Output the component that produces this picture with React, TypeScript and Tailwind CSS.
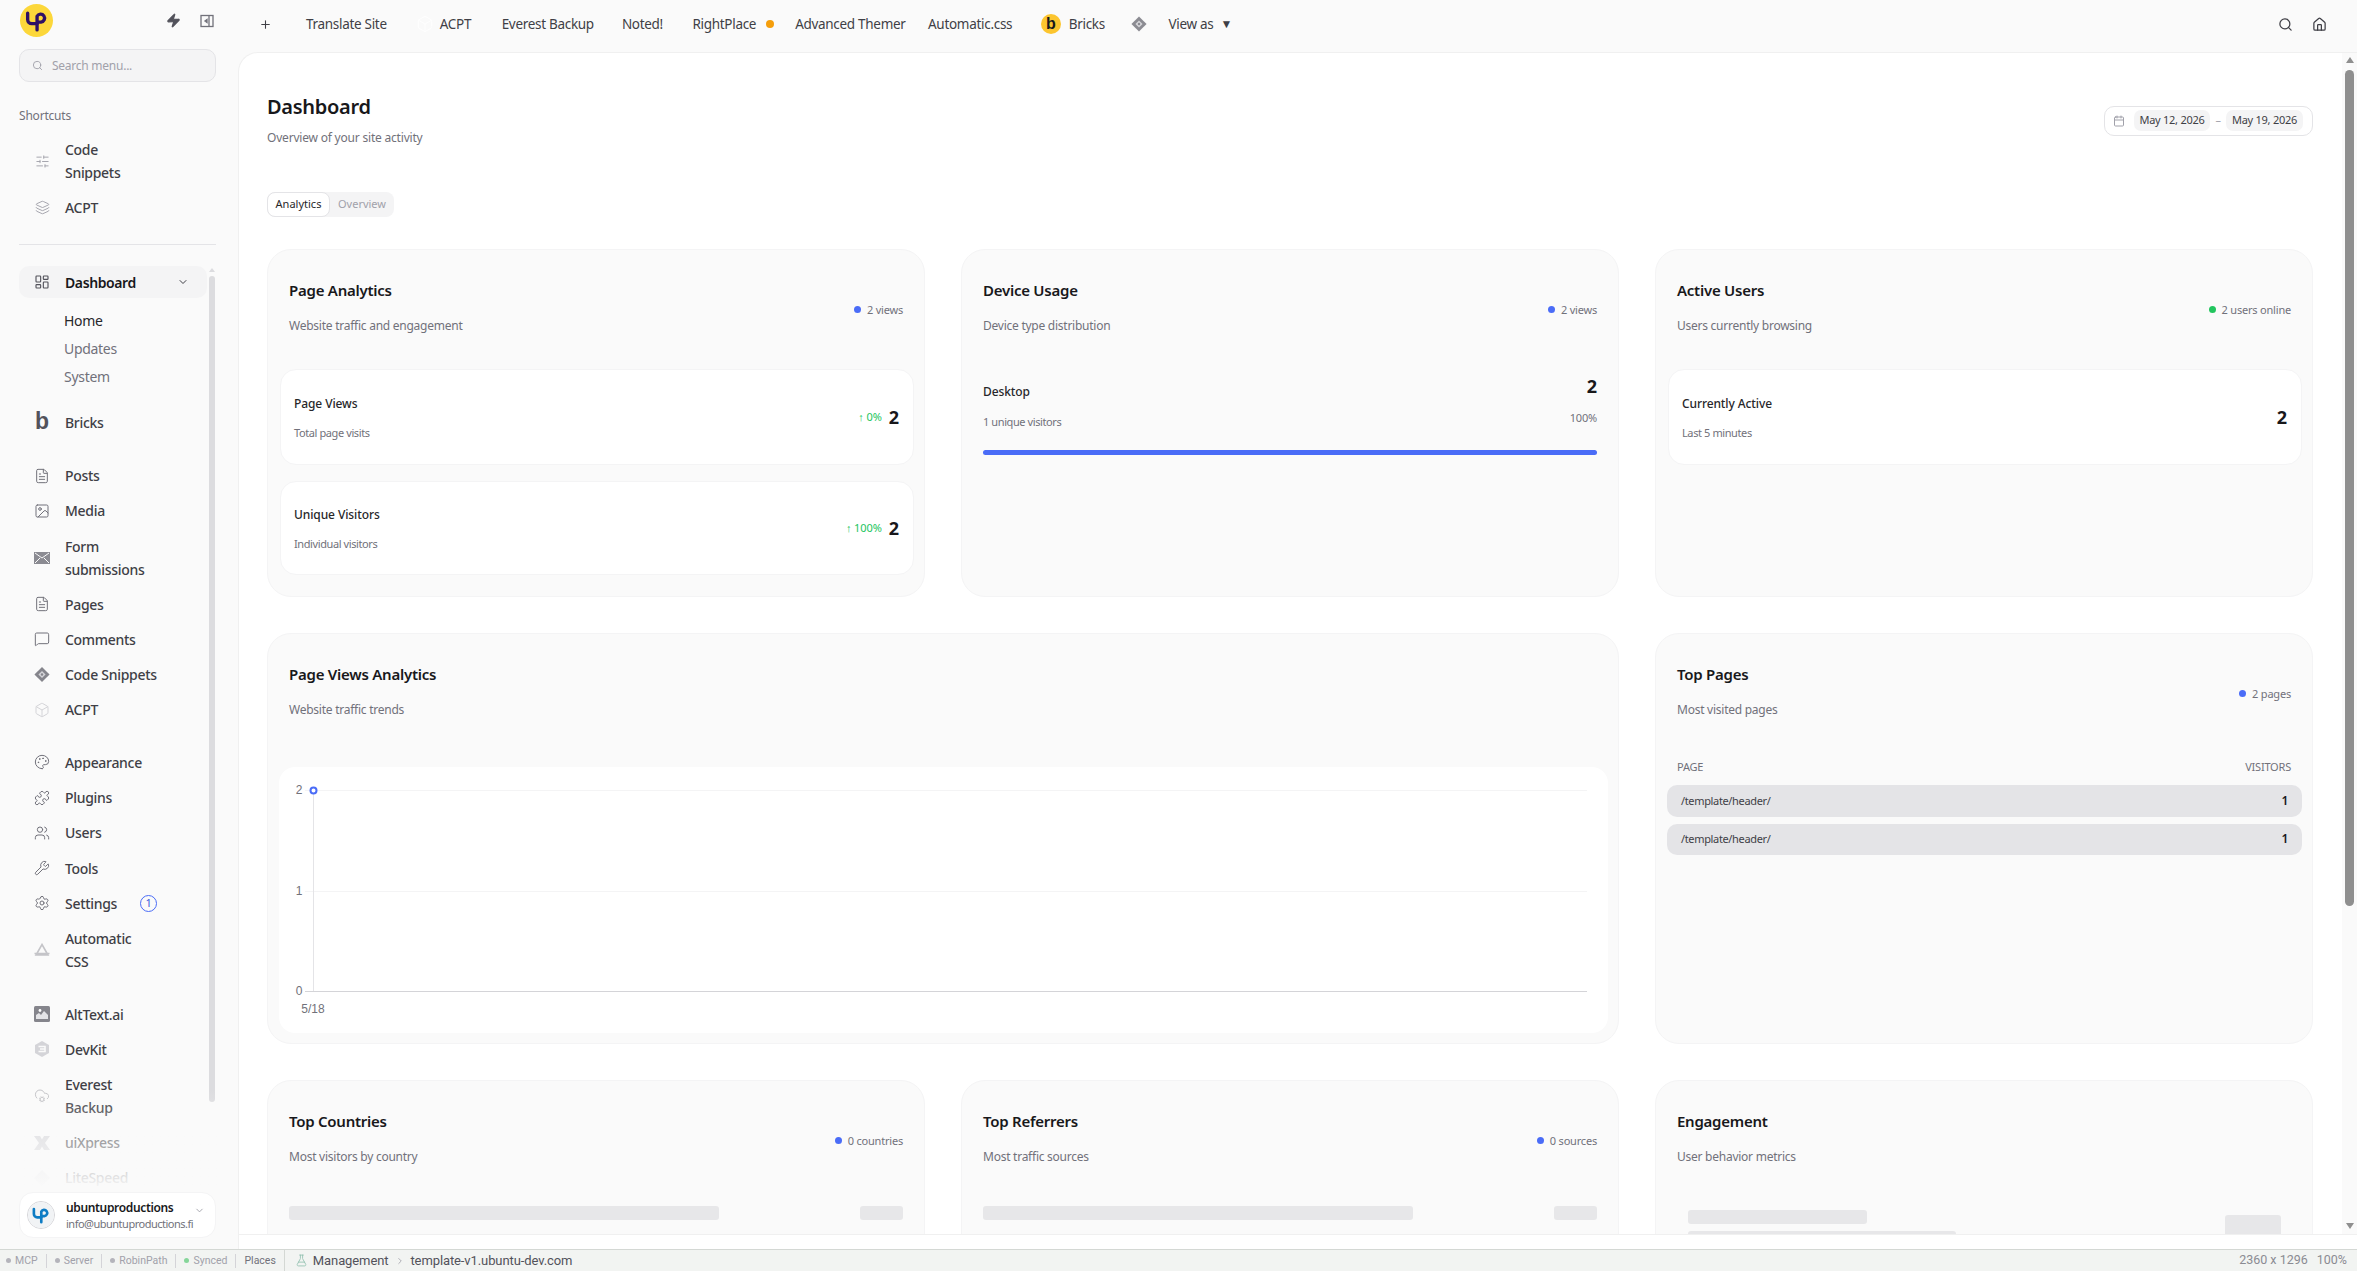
import React from "react";
import {
  SlidersHorizontal, Layers, LayoutDashboard, ChevronDown, FileText, Image as ImageIcon, MessageSquare, Box, Palette, Puzzle, Users, Wrench, Settings, Plus, Search, Home, Calendar, Zap, CloudCog, FlaskConical, ChevronRight,
} from "lucide-react";

const UpLogo = ({ color, size, bg }: { color: string; size: number; bg: string }) => (
  <div className={`flex items-center justify-center rounded-full ${bg}`} style={{ width: size, height: size }}>
    <svg viewBox="0 0 24 24" width={size * 0.76} height={size * 0.76} fill="none" stroke={color} strokeWidth="3.2" strokeLinecap="round" strokeLinejoin="round">
      <path d="M3.5 5v6a4 4 0 0 0 4 4h5" />
      <path d="M12.5 21V8a3.8 3.8 0 1 1 3.8 5.5h-3.8" />
    </svg>
  </div>
);

const Envelope = () => (
  <svg viewBox="0 0 16 12" width="16" height="12" fill="#8b8b92">
    <path d="M0 0h16v12H0z" />
    <path d="M1 1l7 5 7-5M1 11l5-5M15 11l-5-5" stroke="#fafafa" strokeWidth="1" fill="none" />
  </svg>
);
const Diamond = ({ c = "#85858c", s = 17 }: { c?: string; s?: number }) => (
  <svg viewBox="0 0 18 18" width={s} height={s}>
    <path d="M9 0.5L17.5 9 9 17.5 0.5 9z" fill={c} />
    <path d="M9 5l4 4-4 4-4-4z" fill="#d4d4d8" />
    <circle cx="9" cy="9" r="1.4" fill={c} />
  </svg>
);
const Tri = () => (
  <svg viewBox="0 0 16 14" width="16" height="14" fill="none" stroke="#c4c4c8" strokeWidth="1.6">
    <path d="M8 1.5L14 12H2zM0.5 10.5h15" />
  </svg>
);
const AltIcon = () => (
  <svg viewBox="0 0 16 16" width="16" height="16">
    <rect width="16" height="16" rx="1.5" fill="#85858c" />
    <path d="M2 13V9l3-2 2 2 3-4 4 4v4z" fill="#e4e4e7" />
    <circle cx="6" cy="4.5" r="1.4" fill="#fff" />
  </svg>
);
const DevKitIcon = () => (
  <svg viewBox="0 0 16 16" width="16" height="16">
    <path d="M8 0l7 4v8l-7 4-7-4V4z" fill="#d4d4d8" />
    <path d="M4.5 5.5h6.5v5H4.5M6 8h5" stroke="#fafafa" strokeWidth="1.6" fill="none" />
  </svg>
);
const XIcon = () => (
  <svg viewBox="0 0 16 14" width="16" height="14" fill="#d4d4d8">
    <path d="M0 0h6l2 3.5L10 0h6l-5 7 5 7h-6L8 10.5 6 14H0l5-7z" />
  </svg>
);
const LsIcon = () => (
  <svg viewBox="0 0 16 16" width="16" height="16" fill="#e4e4e7"><path d="M8 0l8 8-8 8-8-8z" /></svg>
);
const BIcon = () => <span className="font-bold text-[23px] leading-none -mt-[3px] text-[#52525b] font-['Liberation_Sans',sans-serif]">b</span>;

type It = { t: string; i: React.ReactNode; badge?: boolean };
const L = "#71717a";
const ic = { size: 16, color: L, strokeWidth: 1.5 };

const groups: It[][] = [
  [{ t: "Bricks", i: <BIcon /> }],
  [
    { t: "Posts", i: <FileText {...ic} /> },
    { t: "Media", i: <ImageIcon {...ic} /> },
    { t: "Form\nsubmissions", i: <Envelope /> },
    { t: "Pages", i: <FileText {...ic} /> },
    { t: "Comments", i: <MessageSquare {...ic} /> },
    { t: "Code Snippets", i: <Diamond /> },
    { t: "ACPT", i: <Box size={16} color="#d4d4d8" strokeWidth={1.5} /> },
  ],
  [
    { t: "Appearance", i: <Palette {...ic} /> },
    { t: "Plugins", i: <Puzzle {...ic} /> },
    { t: "Users", i: <Users {...ic} /> },
    { t: "Tools", i: <Wrench {...ic} /> },
    { t: "Settings", i: <Settings {...ic} />, badge: true },
    { t: "Automatic\nCSS", i: <Tri /> },
  ],
  [
    { t: "AltText.ai", i: <AltIcon /> },
    { t: "DevKit", i: <DevKitIcon /> },
    { t: "Everest\nBackup", i: <CloudCog size={16} color="#c4c4c8" strokeWidth={1.5} /> },
    { t: "uiXpress", i: <XIcon /> },
    { t: "LiteSpeed", i: <LsIcon /> },
  ],
];

const NavRow = ({ it }: { it: It }) => (
  <div className="flex items-center pl-[15px] py-[6.1px]">
    <div className="w-[16px] flex justify-center shrink-0">{it.i}</div>
    <div className="ml-[15px] text-[14px] leading-[23px] tracking-[-0.3px] text-[#3f3f46] font-medium whitespace-pre-line">{it.t}</div>
    {it.badge && (
      <div className="ml-[23px] w-[17px] h-[17px] rounded-full border border-[#4a6cf7] text-[#3b5bdb] text-[11px] flex items-center justify-center">1</div>
    )}
  </div>
);

const Sidebar = () => (
  <aside className="w-[238px] shrink-0 flex flex-col bg-[#fafafa] pl-[19px] pr-[22px] min-h-0">
    <div className="h-[49px] shrink-0 flex items-center justify-between">
      <div className="ml-px -mt-[8px]"><UpLogo color="#2e1065" size={33} bg="bg-[#fcd73a]" /></div>
      <div className="flex items-center gap-[19px] pr-[2px] -mt-[8px]">
        <Zap size={15} fill="#52525b" color="#52525b" />
        <svg viewBox="0 0 14 14" width="14" height="14" fill="none" stroke="#71717a" strokeWidth="1.3"><rect x="1" y="1.5" width="12" height="11" /><path d="M9 1.5v11" /><path d="M7 5.5L5 7l2 1.5z" fill="#71717a" /></svg>
      </div>
    </div>
    <div className="h-[33px] shrink-0 rounded-[10px] border border-[#e4e4e7] bg-[#f4f4f5] flex items-center pl-[12px] gap-[9px]">
      <Search size={11} color="#a1a1aa" />
      <span className="text-[12px] tracking-[-0.25px] text-[#a1a1aa]">Search menu...</span>
    </div>
    <div className="mt-[24px] text-[12px] leading-[20px] tracking-[-0.2px] text-[#71717a]">Shortcuts</div>
    <div className="mt-[6px]">
      <NavRow it={{ t: "Code\nSnippets", i: <SlidersHorizontal size={15} color="#a1a1aa" strokeWidth={1.5} /> }} />
      <NavRow it={{ t: "ACPT", i: <Layers size={15} color="#a1a1aa" strokeWidth={1.5} /> }} />
    </div>
    <div className="mt-[19px] h-px bg-[#e4e4e7] shrink-0" />
    <div className="relative flex-1 min-h-0 overflow-hidden flex -mr-[1px] pt-[21px]">
      <div className="w-[188px] shrink-0">
        <div className="h-[32px] rounded-[10px] bg-[#f4f4f5] flex items-center pl-[15px] pr-[18px]">
          <LayoutDashboard size={16} color="#52525b" strokeWidth={1.7} />
          <span className="ml-[15px] text-[14px] font-semibold tracking-[-0.4px] text-[#18181b] flex-1">Dashboard</span>
          <ChevronDown size={12} color="#3f3f46" />
        </div>
        <div className="mt-[9px] mb-[14px] pl-[45px] text-[14px] leading-[28px] tracking-[-0.3px]">
          <div className="text-[#27272a]">Home</div>
          <div className="text-[#71717a]">Updates</div>
          <div className="text-[#71717a]">System</div>
        </div>
        {groups.map((g, i) => (
          <div key={i} className="mb-[17.5px]">
            {g.map((it) => <NavRow key={it.t} it={it} />)}
          </div>
        ))}
      </div>
      <div className="ml-[2px] w-[6px] flex flex-col items-center shrink-0 -mt-[21px] pt-[23px]">
        <div className="w-0 h-0 border-x-[3px] border-x-transparent border-b-[4px] border-b-[#dcdcdf]" />
        <div className="mt-[4px] w-[6px] h-[826px] rounded-full bg-[#dcdcdf]" />
      </div>
      <div className="absolute left-0 right-0 bottom-0 h-[100px] bg-gradient-to-b from-[#fafafa00] to-[#fafafa]" />
    </div>
    <div className="shrink-0 h-[46px] mt-[2px] mb-[11px] rounded-[14px] bg-white border border-[#f4f4f5] flex items-center pl-[7px] pr-[10px]">
      <div className="border border-[#d4d4d8] rounded-full"><UpLogo color="#0e7cc4" size={26} bg="bg-[#f1f3f5]" /></div>
      <div className="ml-[11px] flex-1 pt-px">
        <div className="text-[12px] font-semibold tracking-[-0.35px] text-[#18181b] leading-[16px]">ubuntuproductions</div>
        <div className="text-[11px] tracking-[-0.5px] text-[#71717a] leading-[16px]">info@ubuntuproductions.fi</div>
      </div>
      <ChevronDown size={11} color="#a1a1aa" className="-mt-[10px]" />
    </div>
  </aside>
);

const TopBar = () => (
  <div className="h-[52px] shrink-0 flex items-center bg-[#fafafa] text-[13.5px] tracking-[-0.3px] text-[#3f3f46] pl-[21px] pr-[30px] pb-[4px]">
    <Plus size={13} color="#3f3f46" />
    <span className="ml-[34px]">Translate Site</span>
    <Box size={18} color="#ffffff" strokeWidth={1.2} className="ml-[29px]" />
    <span className="ml-[6px]">ACPT</span>
    <span className="ml-[30.5px]">Everest Backup</span>
    <span className="ml-[28px]">Noted!</span>
    <span className="ml-[29.5px]">RightPlace</span>
    <span className="ml-[10px] w-[8px] h-[8px] rounded-full bg-[#f59e0b]" />
    <span className="ml-[21px]">Advanced Themer</span>
    <span className="ml-[22.5px]">Automatic.css</span>
    <span className="ml-[28.5px] w-[20px] h-[20px] rounded-full bg-[#fcc52e] flex items-center justify-center font-bold text-[16px] leading-none text-[#18181b] font-['Liberation_Sans',sans-serif]">b</span>
    <span className="ml-[8px]">Bricks</span>
    <span className="ml-[26px]"><Diamond c="#8b8b92" s={16} /></span>
    <span className="ml-[21.5px]">View as</span>
    <span className="ml-[7px] text-[12px] leading-none">▼</span>
    <div className="ml-auto flex items-center gap-[19px]">
      <Search size={15} color="#3f3f46" />
      <Home size={15} color="#3f3f46" />
    </div>
  </div>
);

const Badge = ({ t, green }: { t: string; green?: boolean }) => (
  <div className="flex items-center gap-[6px] mt-[7px] text-[11px] leading-[16px] tracking-[-0.2px] text-[#71717a]">
    <span className={`w-[7px] h-[7px] rounded-full ${green ? "bg-[#22c55e]" : "bg-[#4a6cf7]"}`} />
    {t}
  </div>
);

const Card = ({ title, desc, badge, green, children, className = "" }: { title: string; desc: string; badge?: string; green?: boolean; children?: React.ReactNode; className?: string }) => (
  <div className={`rounded-[24px] bg-[#fafafa] border border-[#f4f4f5] flex flex-col ${className}`}>
    <div className="pt-[28px] px-[21px] flex items-center justify-between">
      <div>
        <div className="text-[15px] leading-[24px] font-semibold tracking-[-0.25px] text-[#18181b]">{title}</div>
        <div className="mt-[16px] text-[12px] leading-[16px] tracking-[-0.25px] text-[#71717a]">{desc}</div>
      </div>
      {badge && <Badge t={badge} green={green} />}
    </div>
    {children}
  </div>
);

const Stat = ({ t, d, tr, h }: { t: string; d: string; tr?: string; h: string }) => (
  <div className={`${h} rounded-[16px] bg-white border border-[#f4f4f5] pl-[13px] pr-[14px] flex items-center justify-between`}>
    <div className="flex flex-col gap-[11px]">
      <div className="text-[12px] leading-[20px] font-medium tracking-[-0.1px] text-[#27272a]">{t}</div>
      <div className="text-[11px] leading-[16px] tracking-[-0.4px] text-[#71717a]">{d}</div>
    </div>
    <div className="flex items-center gap-[7px]">
      {tr && <span className="text-[11px] tracking-[-0.1px] text-[#22c55e]">{tr}</span>}
      <span className="text-[18px] font-bold text-[#18181b] leading-[28px]">2</span>
    </div>
  </div>
);

const Chart = () => (
  <div className="mt-[49px] ml-[11px] mr-[10px] mb-[10px] h-[266px] rounded-[16px] bg-white">
    <svg viewBox="0 0 1329 266" className="w-full h-full block font-['Liberation_Sans',sans-serif]">
      <path d="M26 23.5H1308M26 124.5H1308" stroke="#f4f4f5" />
      <path d="M34.5 23V224" stroke="#e4e4e7" />
      <path d="M26 224.5H1308" stroke="#d4d4d8" />
      <g fontSize="12" fill="#71717a" textAnchor="middle">
        <text x="20" y="27">2</text>
        <text x="20" y="128">1</text>
        <text x="20" y="228">0</text>
        <text x="34" y="246">5/18</text>
      </g>
      <circle cx="34.5" cy="23.5" r="3" fill="#fff" stroke="#4a6cf7" strokeWidth="2" />
    </svg>
  </div>
);

const Skel = ({ className }: { className: string }) => <div className={`rounded-[3px] bg-[#e7e7e9] ${className}`} />;

const SkelRow = () => (
  <div className="mt-[41px] px-[21px] flex justify-between">
    <Skel className="w-[430px] h-[14px]" />
    <Skel className="w-[43px] h-[14px]" />
  </div>
);

const Content = () => (
  <div className="flex-1 min-w-0 min-h-0 overflow-hidden pl-[28px] pr-[29px]">
    <div className="pt-[40px] flex items-center justify-between">
      <div>
        <div className="text-[20px] leading-[28px] font-semibold tracking-[-0.3px] text-[#18181b]">Dashboard</div>
        <div className="mt-[9px] text-[12px] leading-[16px] tracking-[-0.2px] text-[#71717a]">Overview of your site activity</div>
      </div>
      <div className="mt-[2px] h-[30px] w-[209px] rounded-[10px] border border-[#e4e4e7] bg-white flex items-center pl-[8px] text-[11px] tracking-[-0.25px] text-[#3f3f46]">
        <Calendar size={12} color="#a1a1aa" />
        <span className="ml-[9px] w-[76px] h-[21px] rounded-[7px] bg-[#f4f4f5] flex items-center justify-center">May 12, 2026</span>
        <span className="w-[16px] text-center text-[#a1a1aa]">–</span>
        <span className="w-[77px] h-[21px] rounded-[7px] bg-[#f4f4f5] flex items-center justify-center">May 19, 2026</span>
      </div>
    </div>
    <div className="mt-[46px] h-[25px] w-[127px] rounded-[8px] bg-[#f4f4f5] flex items-center text-[11px]">
      <div className="w-[63px] h-[25px] rounded-[8px] bg-white border border-[#e4e4e7] flex items-center justify-center text-[#27272a]">Analytics</div>
      <div className="flex-1 text-center text-[#a1a1aa]">Overview</div>
    </div>
    <div className="mt-[32px] grid grid-cols-3 gap-x-[36px] gap-y-[36px]">
      <Card title="Page Analytics" desc="Website traffic and engagement" badge="2 views">
        <div className="mt-[35px] mb-[21px] pl-[12px] pr-[10px] flex flex-col gap-[16px]">
          <Stat t="Page Views" d="Total page visits" tr="↑ 0%" h="h-[96px]" />
          <Stat t="Unique Visitors" d="Individual visitors" tr="↑ 100%" h="h-[94px]" />
        </div>
      </Card>
      <Card title="Device Usage" desc="Device type distribution" badge="2 views">
        <div className="mt-[38px] px-[21px]">
          <div className="flex justify-between">
            <div className="pt-[10px]">
              <div className="text-[12px] leading-[20px] font-medium tracking-[-0.1px] text-[#27272a]">Desktop</div>
              <div className="mt-[12px] text-[11px] leading-[16px] tracking-[-0.4px] text-[#71717a]">1 unique visitors</div>
            </div>
            <div className="text-right">
              <div className="text-[18px] leading-[28px] font-bold text-[#18181b]">2</div>
              <div className="mt-[10px] text-[11px] leading-[16px] tracking-[-0.2px] text-[#71717a]">100%</div>
            </div>
          </div>
          <div className="mt-[20px] h-[5px] rounded-full bg-[#4a6cf7]" />
        </div>
      </Card>
      <Card title="Active Users" desc="Users currently browsing" badge="2 users online" green>
        <div className="mt-[35px] pl-[12px] pr-[10px]">
          <Stat t="Currently Active" d="Last 5 minutes" h="h-[96px]" />
        </div>
      </Card>
      <Card title="Page Views Analytics" desc="Website traffic trends" className="col-span-2">
        <Chart />
      </Card>
      <Card title="Top Pages" desc="Most visited pages" badge="2 pages">
        <div className="mt-[41px] px-[21px] flex justify-between text-[11px] leading-[16px] tracking-[-0.2px] text-[#71717a]">
          <span>PAGE</span><span>VISITORS</span>
        </div>
        <div className="mt-[10px] pl-[11px] pr-[10px] flex flex-col gap-[7px]">
          {[0, 1].map((i) => (
            <div key={i} className="h-[31.5px] rounded-[10px] bg-[#e4e4e7] flex items-center justify-between px-[14px] text-[11px] tracking-[-0.35px] text-[#3f3f46]">
              <span>/template/header/</span>
              <span className="font-semibold text-[12px] text-[#18181b]">1</span>
            </div>
          ))}
        </div>
      </Card>
      <Card title="Top Countries" desc="Most visitors by country" badge="0 countries" className="h-[300px]"><SkelRow /></Card>
      <Card title="Top Referrers" desc="Most traffic sources" badge="0 sources" className="h-[300px]"><SkelRow /></Card>
      <Card title="Engagement" desc="User behavior metrics" className="h-[300px]">
        <div className="mt-[45px] pl-[32px] pr-[31px] flex justify-between">
          <div>
            <Skel className="w-[179px] h-[14px]" />
            <Skel className="mt-[7px] w-[268px] h-[14px]" />
          </div>
          <Skel className="mt-[5px] w-[56px] h-[40px]" />
        </div>
      </Card>
    </div>
  </div>
);

const ScrollBar = () => (
  <div className="w-[15px] shrink-0 bg-[#fafafa] flex flex-col items-center pt-[4px] pb-[2px]">
    <div className="w-0 h-0 border-x-[4.5px] border-x-transparent border-b-[6px] border-b-[#8f8f8f]" />
    <div className="mt-[7px] w-[9px] h-[836px] rounded-full bg-[#8f8f8f]" />
    <div className="mt-auto mb-[3px] w-0 h-0 border-x-[4.5px] border-x-transparent border-t-[6px] border-t-[#8f8f8f]" />
  </div>
);

const Sep = () => <span className="w-px h-[14px] bg-[#d4d4d8]" />;
const Stt = ({ t, c = "bg-[#b4b4bb]", w }: { t: string; c?: string; w: string }) => (
  <span className={`flex items-center gap-[4px] text-[#a1a1aa] ${w}`}>
    <span className={`w-[5px] h-[5px] rounded-full ${c}`} />
    {t}
  </span>
);

const StatusBar = () => (
  <div className="h-[22px] shrink-0 bg-[#f2f4f2] border-t border-[#d4d8d4] flex items-center pl-[6px] pr-[10px] text-[10.5px] font-['Roboto',sans-serif]">
    <Stt t="MCP" w="mr-[8px]" />
    <Sep />
    <span className="w-[8px]" />
    <Stt t="Server" w="mr-[8px]" />
    <Sep />
    <span className="w-[8px]" />
    <Stt t="RobinPath" w="mr-[8px]" />
    <Sep />
    <span className="w-[8px]" />
    <Stt t="Synced" c="bg-[#86d69a]" w="mr-[8px]" />
    <Sep />
    <span className="ml-[8px] text-[#71717a]">Places</span>
    <span className="ml-[8px] w-px h-[22px] bg-[#d4d8d4]" />
    <FlaskConical size={13} color="#8fbfae" strokeWidth={1.5} className="ml-[10px]" />
    <span className="ml-[5px] text-[13px] tracking-[-0.1px] text-[#52525b]">Management</span>
    <ChevronRight size={10} color="#a1a1aa" className="ml-[7px]" />
    <span className="ml-[5px] text-[13px] tracking-[-0.1px] text-[#52525b]">template-v1.ubuntu-dev.com</span>
    <span className="ml-auto text-[12.5px] text-[#8b8b92]">2360 x 1296</span>
    <span className="ml-[9px] text-[12.5px] text-[#8b8b92]">100%</span>
  </div>
);

export default function App() {
  return (
    <div className="h-screen w-full overflow-hidden flex flex-col bg-[#fafafa] font-['Noto_Sans',sans-serif]">
      <div className="flex-1 min-h-0 flex">
        <Sidebar />
        <div className="flex-1 min-w-0 flex flex-col">
          <TopBar />
          <div className="flex-1 min-h-0 flex flex-col bg-white rounded-tl-[20px] border-l border-t border-[#f0f0f0]">
            <div className="flex-1 min-h-0 flex">
              <Content />
              <ScrollBar />
            </div>
            <div className="h-[15px] shrink-0 border-t border-[#f0f0f0] bg-white" />
          </div>
        </div>
      </div>
      <StatusBar />
    </div>
  );
}
